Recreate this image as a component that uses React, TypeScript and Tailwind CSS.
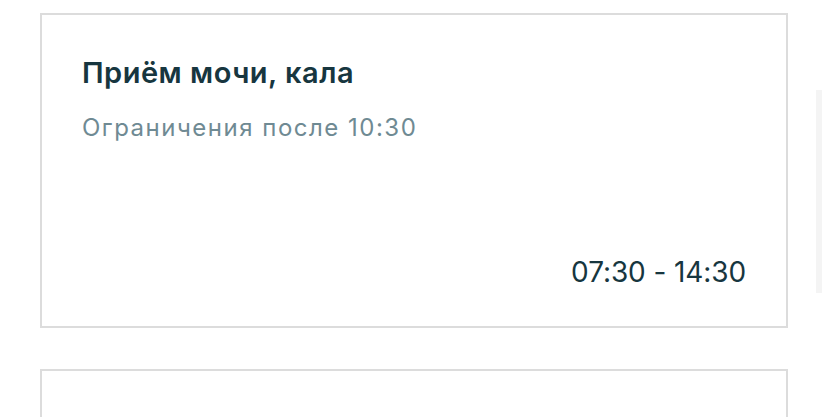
const font = { fontFamily: 'Inter, "Noto Sans", sans-serif' };

const ScheduleCard = ({ title, note, time }: { title?: string; note?: string; time?: string }) => (
  <div className="flex h-[315px] w-[748px] flex-col border-2 border-[#dcdcdc] bg-white px-[40px] pt-[41px] pb-[37px]">
    {title && (
      <>
        <p className="text-[29px] leading-[34px] font-semibold tracking-[0.5px] text-[#17363f]">{title}</p>
        <p className="mt-[24px] text-[24px] leading-[28px] tracking-[1.5px] text-[#6f8a93]">{note}</p>
        <p className="mt-auto text-right text-[28px] leading-[34px] tracking-[-0.1px] text-[#17363f]">{time}</p>
      </>
    )}
  </div>
);

export default function App() {
  return (
    <div className="relative h-[417px] w-[828px] overflow-hidden bg-white" style={font}>
      <div className="flex flex-col gap-[41px] pt-[13px] pl-[40px]">
        <ScheduleCard title="Приём мочи, кала" note="Ограничения после 10:30" time="07:30 - 14:30" />
        <ScheduleCard />
      </div>
      <div className="absolute top-[90px] left-[816px] h-[203px] w-[6px] bg-[#f4f4f4]" />
    </div>
  );
}
